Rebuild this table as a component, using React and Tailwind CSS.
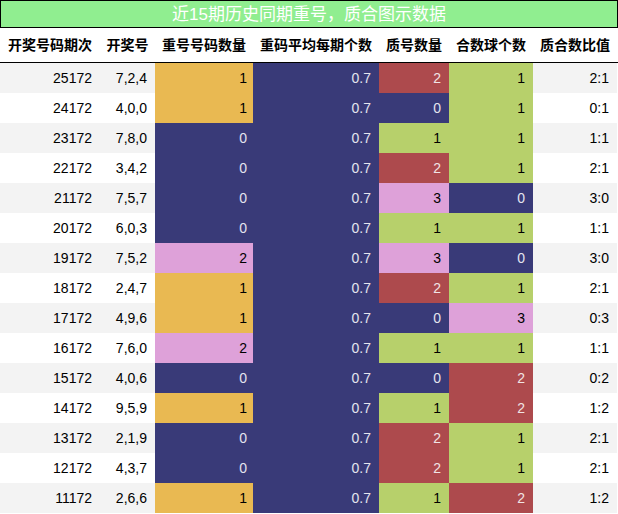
const Y = 'bg-[#e9b952] text-black'
const N = 'bg-[#393a78] text-[#e4e4ee]'
const R = 'bg-[#ad4a4d] text-[#f1e4e4]'
const G = 'bg-[#b7d06b] text-black'
const P = 'bg-[#dea1d9] text-black'

const rows = [
    ['25172', '7,2,4', 1, Y, 2, R, 1, G, '2:1'],
    ['24172', '4,0,0', 1, Y, 0, N, 1, G, '0:1'],
    ['23172', '7,8,0', 0, N, 1, G, 1, G, '1:1'],
    ['22172', '3,4,2', 0, N, 2, R, 1, G, '2:1'],
    ['21172', '7,5,7', 0, N, 3, P, 0, N, '3:0'],
    ['20172', '6,0,3', 0, N, 1, G, 1, G, '1:1'],
    ['19172', '7,5,2', 2, P, 3, P, 0, N, '3:0'],
    ['18172', '2,4,7', 1, Y, 2, R, 1, G, '2:1'],
    ['17172', '4,9,6', 1, Y, 0, N, 3, P, '0:3'],
    ['16172', '7,6,0', 2, P, 1, G, 1, G, '1:1'],
    ['15172', '4,0,6', 0, N, 0, N, 2, R, '0:2'],
    ['14172', '9,5,9', 1, Y, 1, G, 2, R, '1:2'],
    ['13172', '2,1,9', 0, N, 2, R, 1, G, '2:1'],
    ['12172', '4,3,7', 0, N, 2, R, 1, G, '2:1'],
    ['11172', '2,6,6', 1, Y, 1, G, 2, R, '1:2'],
]

const heads = ['开奖号码期次', '开奖号', '重号号码数量', '重码平均每期个数', '质号数量', '合数球个数', '质合数比值']

const cols = 'grid grid-cols-[100px_55px_98px_126px_70px_84px_84px]'

function App() {
    return (
        <div className="w-[618px] h-[514px] bg-white overflow-hidden font-['Liberation_Sans','Noto_Sans_CJK_SC',sans-serif] text-[14px]">
            {/* Title */}
            <div className="h-[28px] border border-black bg-[#90ee90] flex items-center justify-center text-white text-[17px] leading-none">
                近15期历史同期重号，质合图示数据
            </div>

            {/* Header */}
            <div className={`${cols} h-[35px] border-b border-black font-bold text-black`}>
                {heads.map((h) => (
                    <div key={h} className="flex items-center justify-center whitespace-nowrap">{h}</div>
                ))}
            </div>

            {/* Rows */}
            {rows.map((r, i) => {
                const bg = i % 2 === 0 ? 'bg-[#f3f3f3]' : 'bg-white'
                return (
                    <div key={r[0]} className={`${cols} h-[30px]`}>
                        <div className={`${bg} flex items-center justify-end pr-2`}>{r[0]}</div>
                        <div className={`${bg} flex items-center justify-end pr-2`}>{r[1]}</div>
                        <div className={`${r[3]} flex items-center justify-end pr-[6px]`}>{r[2]}</div>
                        <div className={`${N} flex items-center justify-end pr-[8px]`}>0.7</div>
                        <div className={`${r[5]} flex items-center justify-end pr-[8px]`}>{r[4]}</div>
                        <div className={`${r[7]} flex items-center justify-end pr-[8px]`}>{r[6]}</div>
                        <div className={`${bg} flex items-center justify-end pr-[8px]`}>{r[8]}</div>
                    </div>
                )
            })}
        </div>
    )
}

export default App
